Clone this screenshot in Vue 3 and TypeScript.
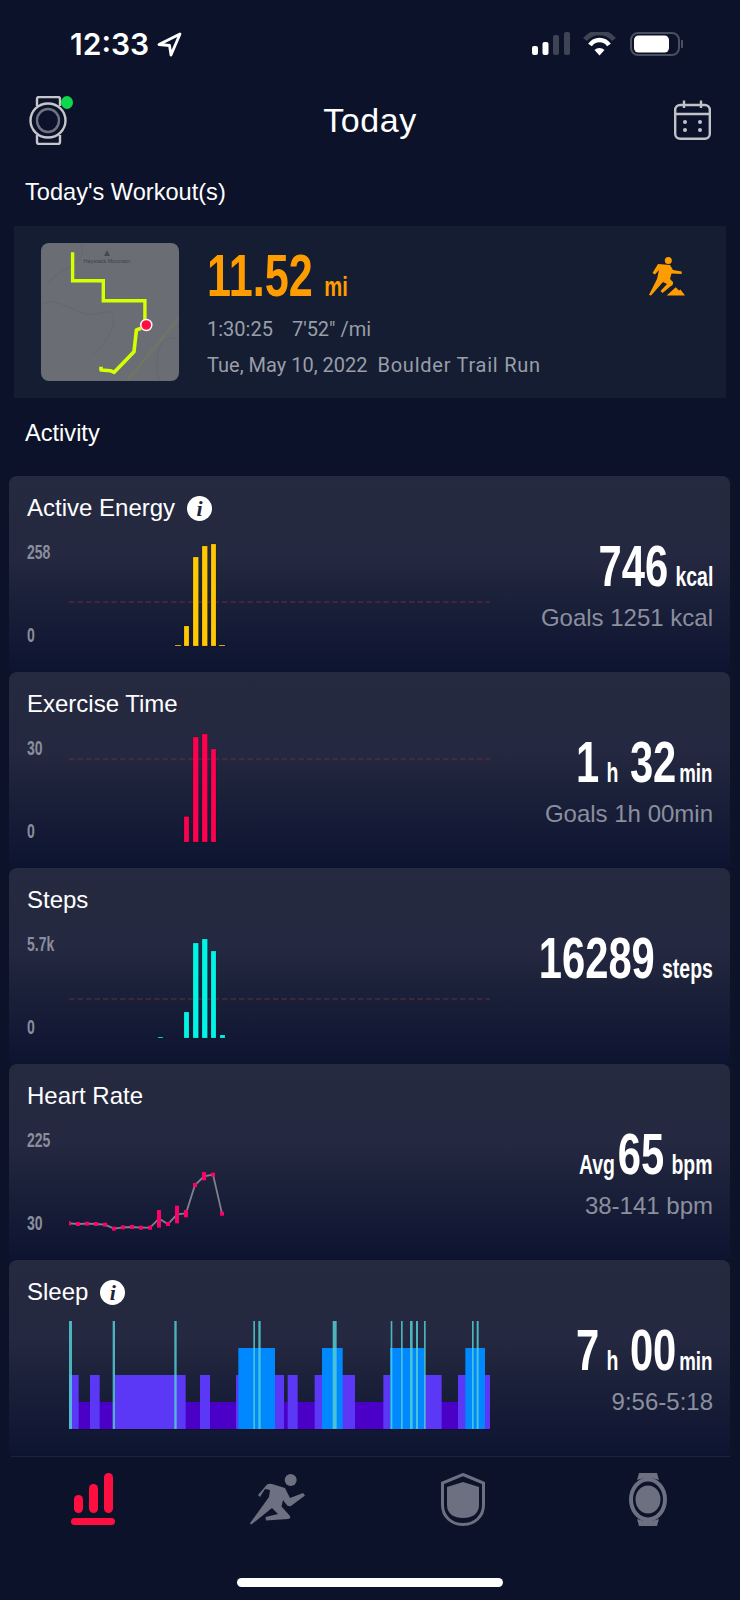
<template>
  <div class="app">
    <!-- Status bar -->
    <div class="status">
      <div class="status-left">
        <span class="time">12:33</span>
        <svg class="arrow" width="25" height="25" viewBox="0 0 25 25">
          <path d="M23 2 L2 12.5 L12.5 13.5 L14 23 Z" fill="none" stroke="#fff" stroke-width="2.8" stroke-linejoin="round" />
        </svg>
      </div>
      <svg class="status-right" width="151" height="24" viewBox="0 0 151 24">
        <rect x="0" y="14" width="6" height="9" rx="2" fill="#fff" />
        <rect x="10.500" y="10" width="6" height="13" rx="2" fill="#fff" />
        <rect x="21" y="3" width="6" height="20" rx="2" fill="#3f4454" />
        <rect x="32" y="0" width="6" height="23" rx="2" fill="#3f4454" />
        <path d="M53 7.500 A 19 19 0 0 1 82 7.500" fill="none" stroke="#3f4454" stroke-width="5" />
        <path d="M58 13 A 11.500 11.500 0 0 1 77 13" fill="none" stroke="#fff" stroke-width="4.500" />
        <path d="M62.500 18 L67.500 23.500 L72.500 18 A 7 7 0 0 0 62.500 18 Z" fill="#fff" />
        <rect x="99" y="1" width="48" height="22" rx="7" fill="none" stroke="#4a4f60" stroke-width="2" />
        <rect x="102" y="3.500" width="35" height="17" rx="4.500" fill="#fff" />
        <path d="M149 8 A 4 4 0 0 1 149 16 Z" fill="#4a4f60" />
      </svg>
    </div>

    <!-- Header -->
    <header class="header">
      <div class="watch">
        <svg width="38" height="49" viewBox="0 0 38 49" fill="none" stroke="#c6c7cb" stroke-width="2.400">
          <path d="M8 10 L8 3 Q8 1 10 1 L29 1 Q31 1 31 3 L31 10" />
          <path d="M8 39 L8 46 Q8 48 10 48 L29 48 Q31 48 31 46 L31 39" />
          <ellipse cx="19" cy="24.500" rx="17.500" ry="17" fill="#0b1229" />
          <ellipse cx="19" cy="24.500" rx="11" ry="11.500" stroke="#6f7484" />
        </svg>
        <span class="online" />
      </div>
      <h1 class="title">Today</h1>
      <svg class="calendar" width="37" height="40" viewBox="0 0 37 40" fill="none" stroke="#c2c3c9" stroke-width="2.400">
        <rect x="1.200" y="5" width="34.600" height="33.800" rx="5" />
        <path d="M1.200 14 H35.800 M10 0.500 V8 M27 0.500 V8" />
        <g fill="#c2c3c9" stroke="none">
          <circle cx="11" cy="22" r="2" />
          <circle cx="26" cy="22" r="2" />
          <circle cx="11" cy="30" r="2" />
          <circle cx="26" cy="30" r="2" />
        </g>
      </svg>
    </header>

    <h2 class="section workouts">Today's Workout(s)</h2>

    <!-- Workout card -->
    <section class="workout">
      <svg class="map" width="138" height="138" viewBox="0 0 138 138">
        <rect width="138" height="138" rx="8" fill="#6a6e74" />
        <path d="M0 62 C20 50 36 78 60 70 S70 100 50 112 M40 0 C48 24 14 26 8 40 M138 96 C120 90 112 110 118 138" fill="none" stroke="#64686e" stroke-width="1" />
        <path d="M86 138 L138 75" stroke="#76745f" stroke-width="2" />
        <path d="M66 7 L69 13 L63 13 Z" fill="#45484e" />
        <text x="66" y="20" text-anchor="middle" class="map-label">Haystack Mountain</text>
        <path d="M31.600 9.300 V37.700 H62.300 V57.700 H103.900 V82" fill="none" stroke="#d6ff00" stroke-width="3.400" />
        <path d="M100 85.300 L95.400 87 L93 108.700 L73.200 129.300 L69.400 127.700 L60 127 L60 123.700" fill="none" stroke="#d6ff00" stroke-width="3.600" stroke-linejoin="round" />
        <circle cx="105.300" cy="82" r="5.500" fill="#ff0f40" stroke="#fff" stroke-width="1.400" />
      </svg>
      <div class="workout-info">
        <div class="distance"><span class="dist-num">11.52</span><span class="dist-unit">mi</span></div>
        <div class="meta"><span>1:30:25</span><span>7'52" /mi</span></div>
        <div class="meta date"><span>Tue, May 10, 2022</span><span class="route">Boulder Trail Run</span></div>
      </div>
      <svg class="trail" width="36" height="39" viewBox="0 0 36 39" fill="#ff9d00">
        <circle cx="19.300" cy="3.500" r="3.500" />
        <path d="M9 7 L21 8 L24 13 L32.700 14.500 V17 L22.500 16.500 L21 22 L24 25 Q24.500 28 22 29 L13.500 36 L11.500 34 L18 27 L14 25 L2 38.500 L0 38 L8 22 L10 13 L6 17.500 L3.500 16 Z" />
        <path d="M17.700 38.500 L26.700 30.300 L30 33.500 L31.500 32.500 L36 38.500 Z" />
      </svg>
    </section>

    <h2 class="section activity">Activity</h2>

    <!-- Activity cards -->
    <section v-for="card in cards" :key="card.title" class="card">
      <div class="card-title">
        <span>{{ card.title }}</span>
        <span v-if="card.info" class="info">i</span>
      </div>
      <div class="card-body">
        <div class="axis">
          <span v-for="label in card.axis" :key="label">{{ label }}</span>
        </div>
        <svg class="chart" width="421" height="122" viewBox="0 0 421 122">
          <line v-if="card.goal" x1="0" x2="421" :y1="card.goal" :y2="card.goal" stroke="#6e2a40" stroke-dasharray="5.500 3" />
          <template v-if="card.bars">
            <rect
              v-for="b in card.bars"
              :key="b[0]"
              :x="b[0]"
              :y="b[1]"
              :width="b[2]"
              :height="118 - b[1]"
              :fill="card.color"
              stroke="rgba(0,0,0,0.25)"
              stroke-width="0.600"
            />
          </template>
          <template v-if="card.title === 'Heart Rate'">
            <polyline :points="heartLine" fill="none" stroke="#80818f" stroke-width="1.800" />
            <rect v-for="(p, i) in heartDots" :key="i" :x="p[0] - 2" :y="p[1]" width="4" :height="p[2]" fill="#ff0068" />
          </template>
          <template v-if="card.title === 'Sleep'">
            <rect :x="sx(207)" y="90" :width="(1471 - 207) / 3" height="27" fill="#4b00c8" />
            <rect v-for="s in sleepLight" :key="s[0]" :x="sx(s[0])" y="63" :width="(s[1] - s[0]) / 3" height="54" fill="#5a38f5" />
            <rect v-for="s in sleepDeep" :key="s[0]" :x="sx(s[0])" y="36" :width="(s[1] - s[0]) / 3" height="81" fill="#0088ff" />
            <rect v-for="s in sleepAwake" :key="s[0]" :x="sx(s[0])" y="9" :width="(s[1] - s[0]) / 3" height="108" fill="#52cdd2" opacity="0.85" />
            <line :x1="sx(207)" :x2="sx(1471)" y1="117.500" y2="117.500" stroke="#0b1229" />
          </template>
        </svg>
        <div class="numbers">
          <div class="val">
            <span v-for="(part, i) in card.value" :key="i" :class="[part.big ? 'big' : 'unit', { tight: part.tight }]">{{ part.t }}</span>
          </div>
          <div class="sub">{{ card.sub }}</div>
        </div>
      </div>
    </section>

    <!-- Tab bar -->
    <nav class="tabs">
      <div class="tab">
        <svg width="44" height="52" viewBox="0 0 44 52" fill="#ff0f40">
          <rect x="3" y="22" width="9" height="18" rx="4.500" />
          <rect x="18" y="11" width="9" height="29" rx="4.500" />
          <rect x="33" y="0" width="9" height="40" rx="4.500" />
          <rect x="0" y="45" width="44" height="7" rx="3.500" />
        </svg>
      </div>
      <div class="tab">
        <svg width="55" height="52" viewBox="0 0 55 52" fill="#6d7080">
          <circle cx="40.700" cy="7" r="6" />
          <path d="M8 22 L17 11.500 Q19 10.500 22 11 L35 15 L40 25 L53 20 L55 22.500 L41 33 Q38 34 36 31 L33 27 L31.500 33.500 L40 43 Q41 46 38 46 L16 47.500 L15.500 44 L28 41 L22 35 L2 51 Q-0.500 52 0.500 49.500 L19 24 L20 17 L15 16 L10 24 Z" />
        </svg>
      </div>
      <div class="tab">
        <svg width="44" height="53" viewBox="0 0 44 53">
          <path d="M22 1.500 L42.500 10 V32 C42.500 44 33 51.500 22 51.500 C11 51.500 1.500 44 1.500 32 V10 Z" fill="none" stroke="#6d7080" stroke-width="3" />
          <path d="M22 9 L38 14 V32 C38 41 31 45 22 45 C13 45 6 41 6 32 V14 Z" fill="#6d7080" />
        </svg>
      </div>
      <div class="tab">
        <svg width="38" height="53" viewBox="0 0 38 53" fill="#6d7080">
          <path d="M10 0 H28 L30 7 Q19 3 8 7 Z" />
          <path d="M8 46 Q19 50 30 46 L28 53 H10 Z" />
          <ellipse cx="19" cy="26.500" rx="17" ry="20" fill="none" stroke="#6d7080" stroke-width="4" />
          <ellipse cx="19" cy="26.500" rx="12.500" ry="14" />
        </svg>
      </div>
    </nav>
    <div class="home-bar" />
  </div>
</template>

<script setup lang="ts">
interface Part {
  t: string;
  big?: boolean;
  tight?: boolean;
}

interface Card {
  title: string;
  info?: boolean;
  axis: string[];
  color?: string;
  goal?: number;
  bars?: number[][];
  value: Part[];
  sub?: string;
}

const cards: Card[] = [
  {
    title: 'Active Energy',
    info: true,
    axis: ['258', '0'],
    color: '#ffc800',
    goal: 74,
    bars: [
      [106, 117, 6],
      [115, 98, 5],
      [124, 29, 5.5],
      [133, 18, 5.5],
      [142, 16, 5],
      [150, 117, 6],
    ],
    value: [{ t: '746', big: true }, { t: 'kcal' }],
    sub: 'Goals 1251 kcal',
  },
  {
    title: 'Exercise Time',
    axis: ['30', '0'],
    color: '#ff0050',
    goal: 35,
    bars: [
      [115, 92.5, 5],
      [124, 13, 5.5],
      [133, 10, 5.5],
      [142, 25, 5],
    ],
    value: [{ t: '1', big: true }, { t: 'h' }, { t: '32', big: true }, { t: 'min', tight: true }],
    sub: 'Goals 1h 00min',
  },
  {
    title: 'Steps',
    axis: ['5.7k', '0'],
    color: '#00f5e6',
    goal: 79,
    bars: [
      [89, 117, 5],
      [115, 92, 5],
      [124, 23, 5.5],
      [133, 19, 5.5],
      [142, 31, 5],
      [151, 115, 5],
    ],
    value: [{ t: '16289', big: true }, { t: 'steps' }],
  },
  {
    title: 'Heart Rate',
    axis: ['225', '30'],
    value: [{ t: 'Avg' }, { t: '65', big: true, tight: true }, { t: 'bpm' }],
    sub: '38-141 bpm',
  },
  {
    title: 'Sleep',
    info: true,
    axis: [],
    value: [{ t: '7', big: true }, { t: 'h' }, { t: '00', big: true }, { t: 'min', tight: true }],
    sub: '9:56-5:18',
  },
];

// measured off the reference at 3x, converted to chart coordinates
const heartRaw = [
  [207, 490], [234, 492], [261, 491], [288, 492], [315, 494], [342, 506],
  [369, 502], [396, 501], [423, 503], [450, 503], [477, 476], [504, 492],
  [531, 463], [558, 460], [585, 375], [612, 349], [639, 344], [666, 461],
];
const heartSpans: Record<number, number[]> = {
  477: [450, 503],
  531: [437, 490],
  558: [450, 472],
  612: [336, 361],
};

const sx = (v: number) => v / 3 - 69;

const heartLine = heartRaw.map(([x, y]) => `${sx(x)},${y / 3 - 56}`).join(' ');
const heartDots = heartRaw.map(([x, y]) => {
  const span = heartSpans[x] ?? [y - 6, y + 6];
  return [sx(x), span[0] / 3 - 56, (span[1] - span[0]) / 3];
});

const sleepLight = [
  [207, 236], [270, 299], [345, 557], [600, 630], [708, 852],
  [863, 893], [944, 1065], [1150, 1325], [1374, 1471],
];
const sleepDeep = [[715, 825], [966, 1028], [1170, 1272], [1396, 1455]];
const sleepAwake = [
  [207, 216], [338, 345], [523, 530], [760, 765], [775, 782], [998, 1010],
  [1172, 1177], [1203, 1208], [1230, 1238], [1248, 1254], [1272, 1277],
  [1416, 1421], [1430, 1436],
];
</script>

<style>
body {
  background: #0b1229;
}
</style>

<style scoped>
.app {
  width: 740px;
  height: 1600px;
  display: flex;
  flex-direction: column;
  background: #0b1229;
  color: #fff;
  font-family: "Liberation Sans", Arial, sans-serif;
  overflow: hidden;
}

.status {
  height: 80px;
  flex: none;
  display: flex;
  justify-content: space-between;
  padding: 32px 57px 0 70px;
  box-sizing: border-box;
}

.status-left {
  display: flex;
  align-items: center;
  gap: 8px;
  height: 24px;
}

.time {
  font-family: Inter, sans-serif;
  font-weight: 600;
  font-size: 30px;
}

.header {
  height: 80px;
  flex: none;
  display: grid;
  grid-template-columns: 1fr auto 1fr;
  align-items: center;
  padding: 0 29px;
}

.watch {
  position: relative;
  width: 38px;
  height: 49px;
}

.online {
  position: absolute;
  left: 32px;
  top: 0;
  width: 12px;
  height: 13px;
  border-radius: 50%;
  background: #0fd84c;
}

.title {
  margin: 0;
  font-size: 34px;
  font-weight: 400;
  letter-spacing: 0.6px;
}

.calendar {
  justify-self: end;
}

.section {
  margin: 0;
  padding-left: 25px;
  font-size: 23.6px;
  font-weight: 400;
  flex: none;
}

.workouts {
  height: 66px;
  line-height: 64px;
}

.activity {
  height: 78px;
  line-height: 70px;
}

.workout {
  flex: none;
  height: 172px;
  margin: 0 14px;
  background: #141d31;
  display: flex;
  align-items: flex-start;
  padding: 17px 41px 0 27px;
  box-sizing: border-box;
}

.map {
  flex: none;
}

.map-label {
  font-size: 5.5px;
  fill: #3d4046;
  font-family: "Liberation Sans", sans-serif;
}

.workout-info {
  flex: 1;
  margin-left: 28px;
}

.distance {
  display: flex;
  align-items: baseline;
  height: 66px;
  font-weight: 700;
  color: #ff9d00;
  transform: scaleX(0.72);
  transform-origin: left;
  line-height: 66px;
}

.dist-num {
  font-size: 60px;
}

.dist-unit {
  font-size: 28px;
  margin-left: 16px;
  font-weight: 700;
}

.meta {
  display: flex;
  gap: 19px;
  font-family: Roboto, sans-serif;
  font-size: 20px;
  color: #9a9ea9;
  margin-top: 2px;
  height: 36px;
  line-height: 36px;
  white-space: nowrap;
}

.date {
  gap: 10px;
  margin-top: 0;
}

.route {
  letter-spacing: 0.75px;
}

.trail {
  flex: none;
  margin-top: 14px;
}

.card {
  flex: none;
  height: 196px;
  margin: 0 10px 0 9px;
  box-sizing: border-box;
  padding: 18px 17px 0 18px;
  border-radius: 8px 8px 0 0;
  background: linear-gradient(#262a40 0%, #242840 40%, #0d1430 100%);
  box-shadow: 5px 0 0 #0e1428;
}

.card-title {
  display: flex;
  align-items: center;
  gap: 12px;
  height: 28px;
  margin-bottom: 6px;
  font-size: 24px;
  white-space: nowrap;
}

.info {
  width: 25px;
  height: 25px;
  border-radius: 50%;
  background: #fff;
  color: #1f2338;
  font-family: "Liberation Serif", serif;
  font-style: italic;
  font-weight: 700;
  font-size: 22px;
  line-height: 25px;
  text-align: center;
}

.card-body {
  display: flex;
}

.axis {
  flex: none;
  width: 42px;
  height: 122px;
  box-sizing: border-box;
  padding-top: 14px;
  display: flex;
  flex-direction: column;
  gap: 63px;
  font-weight: 700;
  font-size: 20px;
  line-height: 20px;
  color: #8a8e9c;
  transform: scaleX(0.7);
  transform-origin: left;
}

.chart {
  flex: none;
}

.numbers {
  flex: 1;
  min-width: 0;
  display: flex;
  flex-direction: column;
  align-items: flex-end;
  white-space: nowrap;
}

.val {
  height: 60px;
  margin-top: 8px;
  line-height: 60px;
  font-weight: 700;
  transform: scaleX(0.72);
  transform-origin: right;
}

.big {
  font-size: 58px;
  margin-left: 16px;
}

.unit {
  font-size: 27px;
  margin-left: 10px;
}

.big:first-child {
  margin-left: 0;
}

.big.tight,
.unit.tight {
  margin-left: 4px;
}

.unit.tight {
  font-size: 26px;
}

.sub {
  font-size: 24px;
  color: #8b8f9e;
  margin-top: 8px;
  line-height: 28px;
}

.tabs {
  flex: none;
  display: grid;
  grid-template-columns: repeat(4, 1fr);
  padding-top: 17px;
  position: relative;
}

.tabs::before {
  content: "";
  position: absolute;
  top: 0;
  left: 11px;
  right: 10px;
  height: 1px;
  background: #1d2338;
}

.tab {
  display: flex;
  justify-content: center;
}

.home-bar {
  width: 266px;
  height: 9px;
  border-radius: 5px;
  background: #fff;
  margin: 52px auto 0;
  flex: none;
}
</style>
